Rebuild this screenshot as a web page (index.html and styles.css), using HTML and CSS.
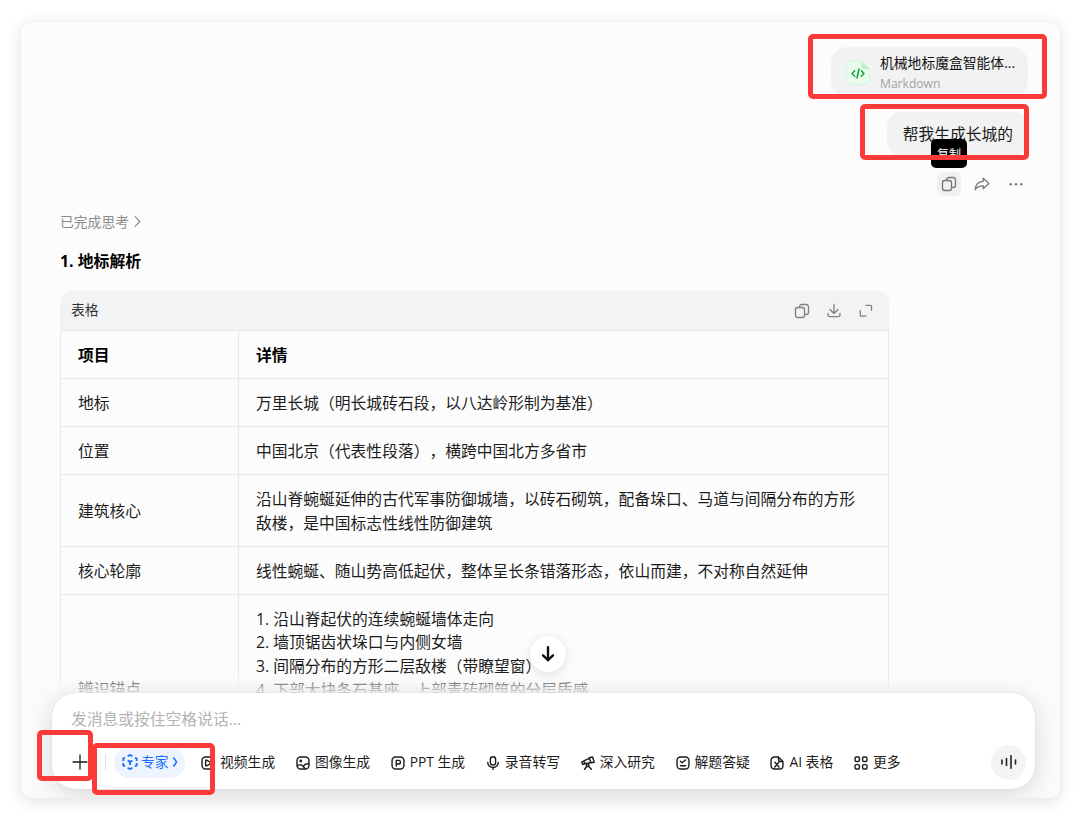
FILE: index.html
```html
<!DOCTYPE html>
<html lang="zh-CN">
<head>
    <meta charset="UTF-8">
    <meta name="viewport" content="width=device-width, initial-scale=1.0">
    <title>对话</title>
    <link rel="stylesheet" href="styles.css">
</head>
<body>
    <div class="window">
        <main class="chat">
            <!-- 用户消息 -->
            <div class="user-msg">
                <div class="file-card">
                    <svg class="file-icon" viewBox="0 0 24 24">
                        <path d="M6 .5h9.500L23.500 8.500V18a6 6 0 0 1-6 6H6.500a6 6 0 0 1-6-6V6A5.500 5.500 0 0 1 6 .5z" fill="#e9fdee" stroke="#c8f3d2" stroke-width=".7"/>
                        <path d="M15.500.5l8 8h-5a3 3 0 0 1-3-3z" fill="#b9f0c6" stroke="none"/>
                        <path d="M8.700 10.300L6 13l2.700 2.700M15.300 10.300L18 13l-2.700 2.700M13 8.500l-2 9" fill="none" stroke="#12a336" stroke-width="1.500"/>
                    </svg>
                    <div class="file-info">
                        <div class="file-name">机械地标魔盒智能体...</div>
                        <div class="file-type">Markdown</div>
                    </div>
                </div>
                <div class="bubble">帮我生成长城的</div>
                <div class="actions">
                    <button class="act active">
                        <svg viewBox="0 0 16 16"><rect x="1.500" y="4.500" width="9" height="10" rx="2.200"/><path d="M5.500 4.500V3.700a2.200 2.200 0 0 1 2.200-2.200h4.600a2.200 2.200 0 0 1 2.200 2.200v5.600a2.200 2.200 0 0 1-2.200 2.200h-1.800"/></svg>
                        <span class="tooltip">复制</span>
                    </button>
                    <button class="act">
                        <svg viewBox="0 0 16 16"><path d="M9.200 2.200l5.800 5.300-5.800 5.300V9.800C5.500 9.700 3 10.800 1.200 13.700c.2-4.500 3-8 8-8.400z"/></svg>
                    </button>
                    <button class="act">
                        <svg class="dots" viewBox="0 0 16 16"><circle cx="2.600" cy="8.200" r="1.200"/><circle cx="8" cy="8.200" r="1.200"/><circle cx="13.400" cy="8.200" r="1.200"/></svg>
                    </button>
                </div>
            </div>

            <!-- 回答 -->
            <div class="thinking">
                <span>已完成思考</span>
                <svg viewBox="0 0 8 14"><path d="M1.200 1.500L6.700 7l-5.500 5.500"/></svg>
            </div>
            <h3>1. 地标解析</h3>

            <div class="table-box">
                <div class="table-bar">
                    <span>表格</span>
                    <div class="table-tools">
                        <svg viewBox="0 0 16 16"><rect x="1.500" y="4.500" width="9" height="10" rx="2.200"/><path d="M5.500 4.500V3.700a2.200 2.200 0 0 1 2.200-2.200h4.600a2.200 2.200 0 0 1 2.200 2.200v5.600a2.200 2.200 0 0 1-2.200 2.200h-1.800"/></svg>
                        <svg viewBox="0 0 16 16"><path d="M8 1.500v8.800M4 6.500l4 4 4-4M2 10.300v1.700a1.700 1.700 0 0 0 1.700 1.700h8.600A1.700 1.700 0 0 0 14 12v-1.700"/></svg>
                        <svg viewBox="0 0 16 16"><path d="M8 2.300h4.500a1 1 0 0 1 1 1v4M2.300 7.500v4.700a1 1 0 0 0 1 1H8"/></svg>
                    </div>
                </div>
                <table>
                    <tr><th>项目</th><th>详情</th></tr>
                    <tr><td>地标</td><td>万里长城（明长城砖石段，以八达岭形制为基准）</td></tr>
                    <tr><td>位置</td><td>中国北京（代表性段落），横跨中国北方多省市</td></tr>
                    <tr><td>建筑核心</td><td>沿山脊蜿蜒延伸的古代军事防御城墙，以砖石砌筑，配备垛口、马道与间隔分布的方形<br>敌楼，是中国标志性线性防御建筑</td></tr>
                    <tr><td>核心轮廓</td><td>线性蜿蜒、随山势高低起伏，整体呈长条错落形态，依山而建，不对称自然延伸</td></tr>
                    <tr>
                        <td class="anchor">辨识锚点</td>
                        <td>1. 沿山脊起伏的连续蜿蜒墙体走向<br>2. 墙顶锯齿状垛口与内侧女墙<br>3. 间隔分布的方形二层敌楼（带瞭望窗）<br>4. 下部大块条石基座、上部青砖砌筑的分层质感<br>5. 依山就势的台阶马道<br>6. 延绵至远山的烽火台</td>
                    </tr>
                </table>
            </div>
        </main>

        <div class="fade"></div>

        <button class="scroll-down">
            <svg viewBox="0 0 16 16"><path d="M8 1.200v13M3 9.400l5 4.800 5-4.800"/></svg>
        </button>

        <!-- 输入框 -->
        <div class="composer">
            <div class="placeholder">发消息或按住空格说话...</div>
            <div class="toolbar">
                <svg class="plus" viewBox="0 0 16 16"><path d="M8 1v14M1 8h14"/></svg>
                <span class="divider"></span>
                <div class="expert">
                    <svg viewBox="0 0 16 16">
                        <path d="M5.600 2.200L8 1l2.400 1.200M5.600 13.800L8 15l2.400-1.200M1.300 7V4.600l1.600-.9M14.700 7V4.600l-1.600-.9M1.300 9v2.400l1.600.9M14.700 9v2.400l-1.600.9"/>
                        <path d="M5.600 6.500L8 7.900l2.400-1.400M8 7.500v3.400"/>
                    </svg>
                    <span>专家</span>
                    <svg class="chev" viewBox="0 0 6 12"><path d="M1.200 1.500c1.300 1.300 2.600 2.800 3.300 4.500-.7 1.700-2 3.200-3.300 4.500"/></svg>
                </div>
                <div class="skills">
                    <div class="skill"><svg viewBox="0 0 16 16"><rect x="1.200" y="1.200" width="13.600" height="13.600" rx="4"/><path d="M5.300 5.500v5a.8.8 0 0 0 1.200.7l4.400-2.500a.8.8 0 0 0 0-1.400L6.500 4.800a.8.8 0 0 0-1.200.7z"/></svg>视频生成</div>
                    <div class="skill"><svg viewBox="0 0 16 16"><rect x="1.200" y="1.200" width="13.600" height="13.600" rx="4"/><circle cx="5.500" cy="5.700" r=".8"/><path d="M1.500 11.500c2.500-2.500 4.500-2 6.500.2l2 2.300M8.500 11.500c1.500-2.500 3.500-3 6-2.500"/></svg>图像生成</div>
                    <div class="skill"><svg viewBox="0 0 16 16"><rect x="1.200" y="1.200" width="13.600" height="13.600" rx="4"/><path d="M6 11.500V5h2.700a2 2 0 0 1 0 4.200H6"/></svg>PPT 生成</div>
                    <div class="skill"><svg viewBox="0 0 16 16"><rect x="5" y=".9" width="6" height="9.400" rx="3"/><path d="M2 7.500a6 5.700 0 0 0 12 0M8 13.200v2.600"/></svg>录音转写</div>
                    <div class="skill"><svg viewBox="0 0 16 16"><path d="M.9 7l2.300-1.300 1.300 3-2.500 1zM3.200 5.700l6.300-3 1.900 4.800-6.900 1.200zM9.300 2l3.900-.9 1.900 6-3.600.6zM7.500 9a1.500 1.500 0 1 0 .1 0M6.700 11.700L4 15.200M8.600 11.600l3.200 3.600"/></svg>深入研究</div>
                    <div class="skill"><svg viewBox="0 0 16 16"><rect x="1.200" y="1.200" width="13.600" height="13.600" rx="4"/><path d="M5 6l2 1.800 3.800-3.300M5 11.200h6"/></svg>解题答疑</div>
                    <div class="skill"><svg viewBox="0 0 16 16"><path d="M9.500 1.200H5a3.800 3.800 0 0 0-3.800 3.800v6A3.800 3.800 0 0 0 5 14.800h6a3.800 3.800 0 0 0 3.800-3.800V6.200zM9.700 1.200v3.300a1.700 1.700 0 0 0 1.700 1.700h3.200M5.500 7l4.800 5.500M10.300 7l-4.800 5.500"/></svg>AI 表格</div>
                    <div class="skill"><svg viewBox="0 0 16 16"><rect x="1.200" y="1.200" width="5" height="5" rx="1.300"/><rect x="9.800" y="1.200" width="5" height="5" rx="1.300"/><rect x="1.200" y="9.800" width="5" height="5" rx="1.300"/><rect x="9.800" y="9.800" width="5" height="5" rx="1.300"/></svg>更多</div>
                </div>
                <button class="voice">
                    <svg viewBox="0 0 18 16"><path d="M2 6v4M6.500 4.500v7M11 1.800v12.400M15.500 6v4"/></svg>
                </button>
            </div>
        </div>
    </div>

    <!-- 标注框 -->
    <div class="mark mark-file"></div>
    <div class="mark mark-text"></div>
    <div class="mark mark-plus"></div>
    <div class="mark mark-expert"></div>
</body>
</html>
```
FILE: styles.css
```css
* {
    box-sizing: border-box;
}
body {
    margin: 0;
    padding: 22px 20px 20px 21px;
    height: 818px;
    overflow: hidden;
    background-color: #fff;
    font-family: "Open Sans", "Noto Sans CJK SC", sans-serif;
    font-size: 15.77px;
    line-height: 23.75px;
    color: #1c1c1c;
    text-spacing-trim: space-all;
    position: relative;
}
svg {
    display: block;
    flex: none;
    fill: none;
    stroke: currentColor;
    stroke-width: 1.3;
    stroke-linejoin: round;
    stroke-linecap: round;
}
button {
    border: none;
    padding: 0;
    font: inherit;
    display: flex;
    align-items: center;
    justify-content: center;
}
.window {
    position: relative;
    height: 776px;
    border-radius: 10px;
    background-color: #fcfcfc;
    box-shadow: 0 0 1px rgba(0, 0, 0, 0.1), 0 3px 16px rgba(0, 0, 0, 0.12);
    overflow: hidden;
}
.chat {
    padding: 25px 32px 0 39px;
}

/* 用户消息 */
.user-msg {
    display: flex;
    flex-direction: column;
    align-items: flex-end;
}
.file-card {
    width: 197px;
    height: 50px;
    padding: 0 13px 0 15px;
    display: flex;
    align-items: center;
    gap: 10px;
    background-color: #f2f2f2;
    border-radius: 16px;
}
.file-icon {
    width: 24px;
    height: 25px;
}
.file-info {
    padding-top: 3px;
}
.file-name {
    font-size: 13.8px;
    line-height: 20px;
    white-space: nowrap;
    color: #111;
}
.file-type {
    font-size: 12.1px;
    line-height: 21px;
    color: #a3a3a3;
}
.bubble {
    margin-top: 15px;
    height: 44px;
    padding: 11px 15px 9px 16px;
    background-color: #f2f2f2;
    border-radius: 14px;
}
.actions {
    display: flex;
    gap: 10px;
    margin-top: 16px;
    color: #777;
}
.act {
    position: relative;
    width: 24px;
    height: 24px;
    border-radius: 6px;
    background: none;
    color: inherit;
}
.act svg {
    width: 16px;
    height: 16px;
}
.act.active {
    margin-right: -1px;
    background-color: #f0f0f0;
}
.act .dots {
    fill: currentColor;
    stroke: none;
}
.tooltip {
    position: absolute;
    left: -6px;
    top: -33px;
    width: 36px;
    height: 29px;
    border-radius: 5px;
    background-color: #000;
    color: #fff;
    font-size: 12px;
    line-height: 31px;
    text-align: center;
}

/* 回答 */
.thinking {
    display: flex;
    align-items: center;
    gap: 5px;
    margin-top: 14px;
    font-size: 13.8px;
    color: #8c8c8c;
}
.thinking svg {
    width: 7px;
    height: 13px;
}
h3 {
    margin: 16px 0 17px;
    font-size: 15.85px;
    font-weight: 700;
    color: #000;
}
.table-box {
    width: 829px;
}
.table-bar {
    display: flex;
    justify-content: space-between;
    align-items: center;
    height: 39px;
    padding: 0 15px 0 11px;
    background-color: #f2f3f5;
    border-radius: 12px 12px 0 0;
    font-size: 13.8px;
    color: #333;
}
.table-tools {
    display: flex;
    gap: 16px;
    padding-top: 1px;
    color: #808080;
}
.table-tools svg {
    width: 16px;
    height: 16px;
}
table {
    width: 829px;
    table-layout: fixed;
    border-collapse: collapse;
}
th, td {
    border: 1px solid #e9e9e9;
    padding: 13px 17px 10.35px 17px;
    text-align: left;
}
th {
    color: #000;
}
th:first-child {
    width: 178px;
}
td.anchor {
    padding-top: 34px;
}

/* 底部 */
.fade {
    position: absolute;
    left: 0;
    right: 0;
    bottom: 0;
    height: 125px;
    background: linear-gradient(rgba(252, 252, 252, 0), #fbfbfb 22px);
}
.scroll-down {
    position: absolute;
    left: 509px;
    top: 614px;
    width: 36px;
    height: 36px;
    border-radius: 50%;
    background-color: #fff;
    box-shadow: 0 2px 10px rgba(0, 0, 0, 0.12);
    color: #111;
}
.scroll-down svg {
    width: 16px;
    height: 16px;
    stroke-width: 2.4;
}
.composer {
    position: absolute;
    left: 31px;
    right: 25px;
    bottom: 9px;
    height: 96px;
    padding: 15px 9px 9px 19px;
    background-color: #fff;
    border-radius: 23px;
    box-shadow: 0 0 1px rgba(0, 0, 0, 0.22), 0 5px 26px rgba(0, 0, 0, 0.14);
}
.placeholder {
    color: #b3b3b3;
}
.toolbar {
    display: flex;
    align-items: center;
    margin-top: 13px;
    height: 35px;
    font-size: 13.8px;
    color: #1c1c1c;
}
.plus {
    width: 16px;
    height: 16px;
    margin-left: 1px;
}
.divider {
    width: 1px;
    height: 16px;
    margin: 0 8px 0 17px;
    background-color: #e3e3e3;
}
.expert {
    display: flex;
    align-items: center;
    width: 71px;
    height: 31px;
    padding-left: 8px;
    border-radius: 15px;
    background-color: #edf4ff;
    color: #1a70ff;
}
.expert svg {
    width: 16px;
    height: 16px;
    margin-right: 3px;
    stroke-width: 1.9;
    stroke-linecap: butt;
}
.expert .chev {
    width: 6px;
    height: 12px;
    margin-left: 3px;
    stroke-width: 1.6;
}
.skills {
    display: flex;
    gap: 20.7px;
    margin-left: 16px;
}
.skill {
    display: flex;
    align-items: center;
    gap: 5px;
    white-space: nowrap;
}
.skill svg {
    width: 14px;
    height: 14px;
    margin-top: 1px;
    stroke-width: 1.6;
}
.voice {
    width: 35px;
    height: 35px;
    margin-left: auto;
    border-radius: 50%;
    background-color: #f4f4f4;
    color: #222;
}
.voice svg {
    width: 18px;
    height: 16px;
    stroke-width: 1.6;
}

/* 标注框 */
.mark {
    position: absolute;
    border: 5px solid #fd3a3a;
    border-radius: 5px;
}
.mark-file {
    left: 808px;
    top: 34px;
    width: 239px;
    height: 65px;
}
.mark-text {
    left: 860px;
    top: 104px;
    width: 169px;
    height: 56px;
}
.mark-plus {
    left: 37px;
    top: 730px;
    width: 56px;
    height: 51px;
}
.mark-expert {
    left: 92px;
    top: 743px;
    width: 123px;
    height: 52px;
}
```
